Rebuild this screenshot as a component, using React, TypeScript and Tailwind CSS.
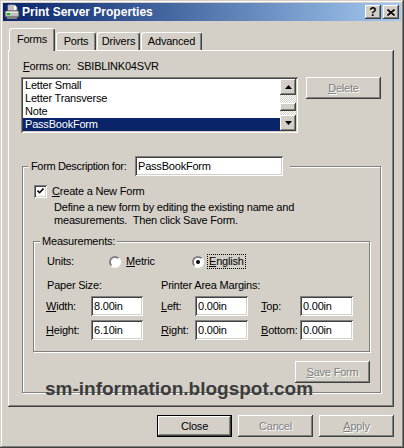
import React from "react";

const FONT = "font-['Liberation_Sans',Arial,sans-serif]";
const RAISED =
  "shadow-[inset_-1px_-1px_0_#404040,inset_1px_1px_0_#fff,inset_-2px_-2px_0_#808080,inset_2px_2px_0_#d4d0c8]";
const SUNKEN =
  "shadow-[inset_1px_1px_0_#808080,inset_-1px_-1px_0_#fff,inset_2px_2px_0_#404040,inset_-2px_-2px_0_#d4d0c8]";
const DISABLED = "text-[#808080] [text-shadow:1px_1px_0_#fff]";

function Button({
  children,
  disabled,
  isDefault,
  className = "",
}: {
  children: React.ReactNode;
  disabled?: boolean;
  isDefault?: boolean;
  className?: string;
}) {
  if (isDefault) {
    return (
      <div
        className={`flex h-[22px] items-center justify-center border border-black bg-[#d4d0c8] shadow-[inset_-1px_-1px_0_#404040,inset_1px_1px_0_#fff,inset_-2px_-2px_0_#808080] ${className}`}
      >
        {children}
      </div>
    );
  }
  return (
    <div
      className={`flex h-[22px] items-center justify-center bg-[#d4d0c8] ${RAISED} ${disabled ? DISABLED : ""} ${className}`}
    >
      {children}
    </div>
  );
}

function TextBox({ value, className = "" }: { value: string; className?: string }) {
  return (
    <div className={`flex h-[20px] items-center bg-white pl-[3px] ${SUNKEN} ${className}`}>
      {value}
    </div>
  );
}

function Radio({ checked }: { checked?: boolean }) {
  return (
    <div className="flex h-[12px] w-[12px] items-center justify-center rounded-full border-[2px] border-t-[#808080] border-l-[#808080] border-b-[#fff] border-r-[#fff] bg-white">
      {checked && <div className="h-[4px] w-[4px] rounded-full bg-black" />}
    </div>
  );
}

function PrinterIcon() {
  return (
    <svg width="16" height="16" viewBox="0 0 16 16">
      <path d="M4 1h7l2 2v4H4z" fill="#fff" stroke="#808080" strokeWidth="1" />
      <path d="M1 7h14v6H1z" fill="#c0c0c0" stroke="#404040" strokeWidth="1" />
      <path d="M2 8h12" stroke="#fff" strokeWidth="1" />
      <rect x="3" y="9" width="3" height="2" fill="#00c000" />
      <path d="M3 13h10v2H3z" fill="#808080" />
      <path d="M5 3h5M5 5h5" stroke="#808080" strokeWidth="1" />
    </svg>
  );
}

function Tab({ label, active, w }: { label: string; active?: boolean; w: string }) {
  return (
    <div
      className={`flex items-center justify-center rounded-t-[3px] border-l border-t border-white border-r border-r-[#404040] bg-[#d4d0c8] shadow-[inset_-1px_0_0_#808080] ${w} ${
        active ? "relative z-10 -mb-[1px] h-[23px] pb-[1px]" : "h-[18px]"
      }`}
    >
      {label}
    </div>
  );
}

export default function App() {
  return (
    <div
      className={`relative flex h-[448px] w-[404px] flex-col overflow-hidden bg-[#d4d0c8] p-[3px] text-[11px] leading-[13px] tracking-[-0.2px] text-black ${FONT} shadow-[inset_-1px_-1px_0_#404040,inset_1px_1px_0_#d4d0c8,inset_-2px_-2px_0_#808080,inset_2px_2px_0_#fff]`}
    >
      {/* title bar */}
      <div className="flex h-[18px] items-center bg-gradient-to-r from-[#0a246a] to-[#a6caf0] pl-[1px] pr-[2px] tracking-normal">
        <PrinterIcon />
        <span className="ml-[2px] text-[12px] font-bold text-white">Print Server Properties</span>
        <div className="ml-auto flex gap-[2px]">
          <div className={`flex h-[14px] w-[16px] items-center justify-center bg-[#d4d0c8] text-[12px] font-bold ${RAISED}`}>
            ?
          </div>
          <div className={`flex h-[14px] w-[16px] items-center justify-center bg-[#d4d0c8] ${RAISED}`}>
            <svg width="8" height="7" viewBox="0 0 8 7">
              <path d="M0.5 0.5l7 6M7.5 0.5l-7 6" stroke="#000" strokeWidth="1.6" />
            </svg>
          </div>
        </div>
      </div>

      {/* body */}
      <div className="flex flex-1 flex-col pl-[5px] pr-[7px] pt-[7px]">
        <div className="flex h-[22px] items-end gap-[1px] pl-[1px]">
          <Tab label="Forms" active w="w-[46px]" />
          <Tab label="Ports" w="w-[40px]" />
          <Tab label="Drivers" w="w-[43px]" />
          <Tab label="Advanced" w="w-[61px]" />
        </div>

        <div className={`flex h-[357px] flex-col bg-[#d4d0c8] px-[13px] pt-[10px] ${RAISED}`}>
          <div className="ml-[2px] flex">
            <span className="w-[54px]">
              <u>F</u>orms on:
            </span>
            <span>SBIBLINK04SVR</span>
          </div>

          <div className="mt-[4px] flex items-start gap-[8px]">
            <div className={`flex h-[56px] w-[277px] bg-white p-[2px] ${SUNKEN}`}>
              <div className="flex flex-1 flex-col">
                <div className="h-[13px] pl-[2px]">Letter Small</div>
                <div className="h-[13px] pl-[2px]">Letter Transverse</div>
                <div className="h-[13px] pl-[2px]">Note</div>
                <div className="h-[13px] bg-[#0a246a] pl-[2px] text-white">PassBookForm</div>
              </div>
              <div className="flex w-[16px] flex-col">
                <div className={`flex h-[16px] items-center justify-center bg-[#d4d0c8] ${RAISED}`}>
                  <svg width="7" height="4" viewBox="0 0 7 4">
                    <path d="M3.5 0L7 4H0z" fill="#000" />
                  </svg>
                </div>
                <div className="flex flex-1 flex-col bg-[repeating-conic-gradient(#fff_0_25%,#d4d0c8_0_50%)] bg-[length:2px_2px]">
                  <div className="h-[8px]" />
                  <div className={`h-[8px] bg-[#d4d0c8] ${RAISED}`} />
                </div>
                <div className={`flex h-[16px] items-center justify-center bg-[#d4d0c8] ${RAISED}`}>
                  <svg width="7" height="4" viewBox="0 0 7 4">
                    <path d="M0 0h7L3.5 4z" fill="#000" />
                  </svg>
                </div>
              </div>
            </div>
            <Button disabled className="w-[75px]">
              <span>
                <u>D</u>elete
              </span>
            </Button>
          </div>

          {/* form description group */}
          <div className="ml-[1px] mt-[33px] flex w-[359px] flex-col border border-[#808080] px-[10px] pb-[9px] shadow-[inset_1px_1px_0_#fff,1px_1px_0_#fff]">
            <div className="-ml-[5px] -mt-[11px] flex items-center self-start bg-[#d4d0c8] pl-[3px] pr-[7px]">
              <span className="w-[104px] whitespace-nowrap tracking-[-0.35px]">Form Description for:</span>
              <TextBox value="PassBookForm" className="w-[148px]" />
            </div>

            <div className="ml-[1px] mt-[9px] flex items-center gap-[5px]">
              <div className={`flex h-[13px] w-[13px] items-center justify-center bg-white ${SUNKEN}`}>
                <svg width="7" height="7" viewBox="0 0 7 7">
                  <path d="M0.5 2.5l2 2.2 4-4.2" fill="none" stroke="#000" strokeWidth="1.6" />
                </svg>
              </div>
              <span>
                <u>C</u>reate a New Form
              </span>
            </div>
            <div className="mt-[3px] pl-[21px]">
              <div>Define a new form by editing the existing name and</div>
              <div>measurements.&nbsp; Then click Save Form.</div>
            </div>

            {/* measurements group */}
            <div className="mt-[14px] flex flex-col border border-[#808080] pb-[11px] pl-[12px] shadow-[inset_1px_1px_0_#fff,1px_1px_0_#fff]">
              <div className="-ml-[6px] -mt-[7px] self-start bg-[#d4d0c8] px-[2px]">Measurements:</div>
              <div className="ml-[1px] mt-[6px] flex items-center">
                <span className="w-[62px]">Units:</span>
                <div className="flex w-[83px] items-center gap-[5px]">
                  <Radio />
                  <span>
                    <u>M</u>etric
                  </span>
                </div>
                <div className="flex items-center gap-[3px]">
                  <Radio checked />
                  <span className="border border-dotted border-black px-[1px]">
                    <u>E</u>nglish
                  </span>
                </div>
              </div>
              <div className="ml-[1px] mt-[10px] flex">
                <span className="w-[114px]">Paper Size:</span>
                <span>Printer Area Margins:</span>
              </div>
              <div className="mt-[4px] flex items-center">
                <span className="w-[45px]">
                  <u>W</u>idth:
                </span>
                <TextBox value="8.00in" className="w-[52px]" />
                <span className="ml-[18px] w-[34px]">
                  <u>L</u>eft:
                </span>
                <TextBox value="0.00in" className="w-[53px]" />
                <span className="ml-[13px] w-[39px]">
                  <u>T</u>op:
                </span>
                <TextBox value="0.00in" className="w-[53px]" />
              </div>
              <div className="mt-[4px] flex items-center">
                <span className="w-[45px]">
                  <u>H</u>eight:
                </span>
                <TextBox value="6.10in" className="w-[52px]" />
                <span className="ml-[18px] w-[34px]">
                  <u>R</u>ight:
                </span>
                <TextBox value="0.00in" className="w-[53px]" />
                <span className="ml-[13px] w-[39px] whitespace-nowrap">
                  <u>B</u>ottom:
                </span>
                <TextBox value="0.00in" className="w-[53px]" />
              </div>
            </div>

            <Button disabled className="mt-[9px] w-[75px] self-end">
              <span>
                <u>S</u>ave Form
              </span>
            </Button>
          </div>
        </div>

        <div className="mt-[8px] flex justify-end gap-[6px]">
          <Button isDefault className="w-[75px]">
            Close
          </Button>
          <Button disabled className="w-[75px]">
            Cancel
          </Button>
          <Button disabled className="w-[75px]">
            <span>
              <u>A</u>pply
            </span>
          </Button>
        </div>
      </div>

      {/* watermark */}
      <div className="pointer-events-none absolute left-[45px] top-[378px] text-[19px] font-bold leading-[22px] tracking-normal text-[#3c3c3c]">
        sm-information.blogspot.com
      </div>
    </div>
  );
}
